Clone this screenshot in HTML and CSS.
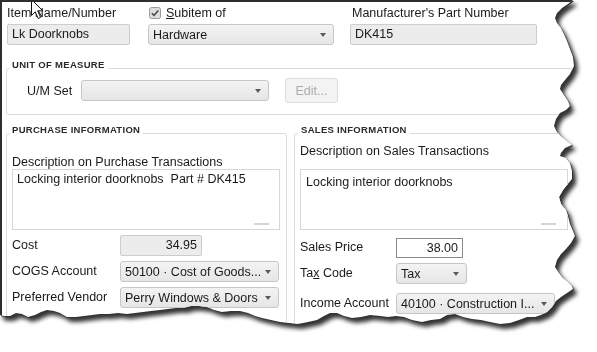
FILE: index.html
```html
<!DOCTYPE html>
<html lang="en">

<head>
  <meta charset="UTF-8">
  <meta name="viewport" content="width=device-width, initial-scale=1.0">
  <title>Edit Item</title>
  <link rel="stylesheet" href="styles.css">
</head>

<body>

  <div class="frame">
    <div class="sheet">

      <div class="head">
        <div class="field f-name">
          <div class="lbl">Item Name/Number</div>
          <div class="input">Lk Doorknobs</div>
        </div>
        <div class="field f-sub">
          <div class="lbl check">
            <svg class="tick" width="12" height="12" viewBox="0 0 12 12">
              <rect x="0.5" y="0.5" width="11" height="11" rx="2" fill="#dedede" stroke="#9a9a9a" />
              <path d="M2.8 6.2 L5 8.4 L9.3 3.4" fill="none" stroke="#4a4a4a" stroke-width="1.6" />
            </svg>
            <span><u>S</u>ubitem of</span>
          </div>
          <div class="select">Hardware</div>
        </div>
        <div class="field f-mfr">
          <div class="lbl">Manufacturer's Part Number</div>
          <div class="input">DK415</div>
        </div>
      </div>

      <fieldset class="group uom">
        <legend>UNIT OF MEASURE</legend>
        <div class="uom-row">
          <span class="uom-lbl">U/M Set</span>
          <div class="select w-uom"></div>
          <button class="btn" disabled>Edit...</button>
        </div>
      </fieldset>

      <div class="cols">
        <fieldset class="group purchase">
          <legend>PURCHASE INFORMATION</legend>
          <div class="desc-lbl">Description on Purchase Transactions</div>
          <div class="memo">
            <span>Locking interior doorknobs&nbsp; Part # DK415</span>
            <i class="grip"></i>
          </div>
          <div class="row first">
            <span class="row-lbl">Cost</span>
            <div class="input num w-cost">34.95</div>
          </div>
          <div class="row">
            <span class="row-lbl">COGS Account</span>
            <div class="select w-acct">50100 · Cost of Goods...</div>
          </div>
          <div class="row">
            <span class="row-lbl">Preferred Vendor</span>
            <div class="select w-acct">Perry Windows &amp; Doors</div>
          </div>
        </fieldset>

        <fieldset class="group sales">
          <legend>SALES INFORMATION</legend>
          <div class="desc-lbl">Description on Sales Transactions</div>
          <div class="memo">
            <span>Locking interior doorknobs</span>
            <i class="grip"></i>
          </div>
          <div class="row first">
            <span class="row-lbl">Sales Price</span>
            <div class="input num white w-price">38.00</div>
          </div>
          <div class="row">
            <span class="row-lbl">Ta<u>x</u> Code</span>
            <div class="select w-tax">Tax</div>
          </div>
          <div class="row wide">
            <span class="row-lbl">Income Account</span>
            <div class="select w-acct">40100 · Construction I...</div>
          </div>
        </fieldset>
      </div>

      <!-- mouse pointer left in the capture -->
      <svg class="cursor" width="14" height="22" viewBox="0 0 14 22">
        <path d="M1.5 1.5 L1.5 17.5 L5.2 13.8 L8.2 20.5 L10.6 19.4 L7.7 12.8 L12.8 12.8 Z" fill="#fff" stroke="#111" stroke-width="1" />
      </svg>

    </div>
  </div>

</body>

</html>
```

FILE: styles.css
```css
* {
  margin: 0;
  padding: 0;
  box-sizing: border-box;
}

body {
  background: #fff;
  font-family: "Liberation Sans", Arial, sans-serif;
  font-size: 12.5px;
  color: #1a1a1a;
}

/* torn paper look */
.frame {
  width: 597px;
  height: 352px;
  filter: drop-shadow(1px 1px 0 #333) drop-shadow(3px 4px 2px rgba(0, 0, 0, .8));
}

.sheet {
  position: relative;
  height: 345px;
  background: #fff;
  border-top: 2px solid #2e2e2e;
  border-left: 2px solid #2e2e2e;
  overflow: hidden;
  clip-path: polygon(0 0, 573px 0, 568px 4px, 562px 8px, 557px 13px, 555px 18px, 557px 23px, 561px 28px, 564px 34px, 567px 41px, 570px 49px, 573px 57px, 574px 66px, 570px 74px, 565px 80px, 561px 85px, 560px 89px, 564px 95px, 568px 101px, 570px 106px, 566px 110px, 560px 113px, 556px 119px, 554px 126px, 557px 132px, 562px 137px, 567px 141px, 572px 145px, 565px 148px, 561px 153px, 560px 156px, 566px 158px, 570px 163px, 572px 171px, 572px 179px, 567px 185px, 563px 190px, 559px 197px, 561px 204px, 566px 210px, 568px 216px, 570px 224px, 573px 231px, 575px 236px, 571px 243px, 566px 249px, 561px 254px, 557px 260px, 555px 267px, 559px 273px, 563px 278px, 568px 282px, 572px 286px, 573px 289px, 567px 293px, 561px 297px, 556px 301px, 552px 307px, 547px 312px, 541px 315px, 535px 317px, 527px 317px, 519px 320px, 510px 323px, 500px 324px, 490px 322px, 481px 320px, 472px 319px, 463px 317px, 455px 314px, 447px 315px, 440px 319px, 431px 320px, 422px 322px, 412px 320px, 404px 317px, 396px 316px, 388px 317px, 380px 316px, 370px 315px, 361px 317px, 352px 318px, 344px 316px, 337px 313px, 330px 313px, 324px 316px, 317px 320px, 308px 322px, 298px 324px, 289px 323px, 280px 322px, 271px 320px, 262px 318px, 255px 316px, 248px 313px, 240px 311px, 231px 311px, 222px 312px, 214px 310px, 207px 307px, 199px 306px, 191px 306px, 183px 308px, 176px 308px, 168px 309px, 160px 310px, 151px 311px, 143px 312px, 135px 313px, 127px 314px, 118px 313px, 109px 314px, 100px 314px, 92px 315px, 84px 316px, 76px 317px, 67px 317px, 60px 313px, 54px 311px, 47px 310px, 41px 312px, 35px 315px, 28px 317px, 22px 314px, 16px 313px, 10px 316px, 4px 316px, 0 315px);
}

.cursor {
  position: absolute;
  left: 28px;
  top: -4px;
}

/* top fields */
.head {
  display: flex;
  padding: 4px 0 0 5px;
}

.lbl {
  line-height: 15px;
  height: 15px;
  margin-bottom: 3px;
  white-space: nowrap;
}

.f-name {
  width: 123px;
}

.f-sub {
  width: 186px;
  margin-left: 18px;
}

.f-mfr {
  width: 187px;
  margin-left: 16px;
}

.f-mfr .lbl {
  padding-left: 2px;
}

.check {
  display: flex;
  align-items: flex-start;
}

.tick {
  margin: 1px 5px 0 1px;
  flex: none;
}

.input {
  height: 21px;
  line-height: 19px;
  padding: 0 4px;
  background: #ececec;
  border: 1px solid #cdcdcd;
  border-radius: 2px;
  white-space: nowrap;
  overflow: hidden;
}

.input.num {
  text-align: right;
}

.input.white {
  background: #fff;
  border-color: #8a8a8a;
  border-radius: 0;
  height: 20px;
  line-height: 18px;
}

.select {
  display: flex;
  align-items: center;
  height: 21px;
  padding-left: 4px;
  background: linear-gradient(#f3f3f3, #e6e6e6);
  border: 1px solid #c6c6c6;
  border-radius: 3px;
  white-space: nowrap;
}

.select::after {
  content: "";
  flex: none;
  margin: 1px 7px 0 auto;
  border-left: 3.5px solid transparent;
  border-right: 3.5px solid transparent;
  border-top: 4px solid #5a5a5a;
}

/* section boxes */
.group {
  border: 1px solid #dadada;
  border-radius: 3px;
  min-width: 0;
}

.group legend {
  margin-left: 2px;
  padding: 0 3px 6px;
  font-size: 9.5px;
  letter-spacing: .3px;
  line-height: 12px;
  font-weight: bold;
  color: #2a2a2a;
}

.uom {
  margin: 14px 0 0 4px;
  padding: 1px 0 11px;
}

.uom-row {
  display: flex;
  align-items: center;
}

.uom-lbl {
  width: 54px;
  margin-left: 20px;
}

.w-uom {
  width: 188px;
}

.btn {
  width: 53px;
  height: 25px;
  margin-left: 16px;
  font: inherit;
  color: #ababab;
  background: #f3f3f3;
  border: 1px solid #dcdcdc;
  border-radius: 3px;
}

.cols {
  display: flex;
  margin-top: 9px;
}

.purchase {
  width: 281px;
  margin-left: 4px;
  padding: 13px 0 30px 5px;
}

.purchase legend {
  margin-left: -3px;
}

.sales {
  flex: 1;
  margin-left: 7px;
  padding: 2px 0 30px 5px;
}

.sales legend {
  margin-left: -2px;
}

.desc-lbl {
  line-height: 14px;
  white-space: nowrap;
}

.memo {
  display: flex;
  flex-direction: column;
  width: 268px;
  height: 61px;
  padding: 2px 4px;
  background: #fff;
  border: 1px solid #d6d6d6;
  white-space: nowrap;
}

.sales .memo {
  margin-top: 11px;
  padding: 5px 5px 2px;
}

.memo span {
  line-height: 15px;
}

.grip {
  width: 15px;
  height: 2px;
  margin: auto 6px 2px 0;
  align-self: flex-end;
  background: #d4d4d4;
}

.row {
  display: flex;
  align-items: center;
  margin-top: 5px;
}

.sales .row.first {
  margin-top: 7px;
}

.row.wide {
  margin-top: 9px;
}

.row-lbl {
  width: 108px;
  line-height: 21px;
  white-space: nowrap;
}

.sales .row-lbl {
  width: 96px;
}

.w-cost {
  width: 82px;
}

.w-acct {
  width: 159px;
}

.w-price {
  width: 67px;
}

.w-tax {
  width: 71px;
}
```
